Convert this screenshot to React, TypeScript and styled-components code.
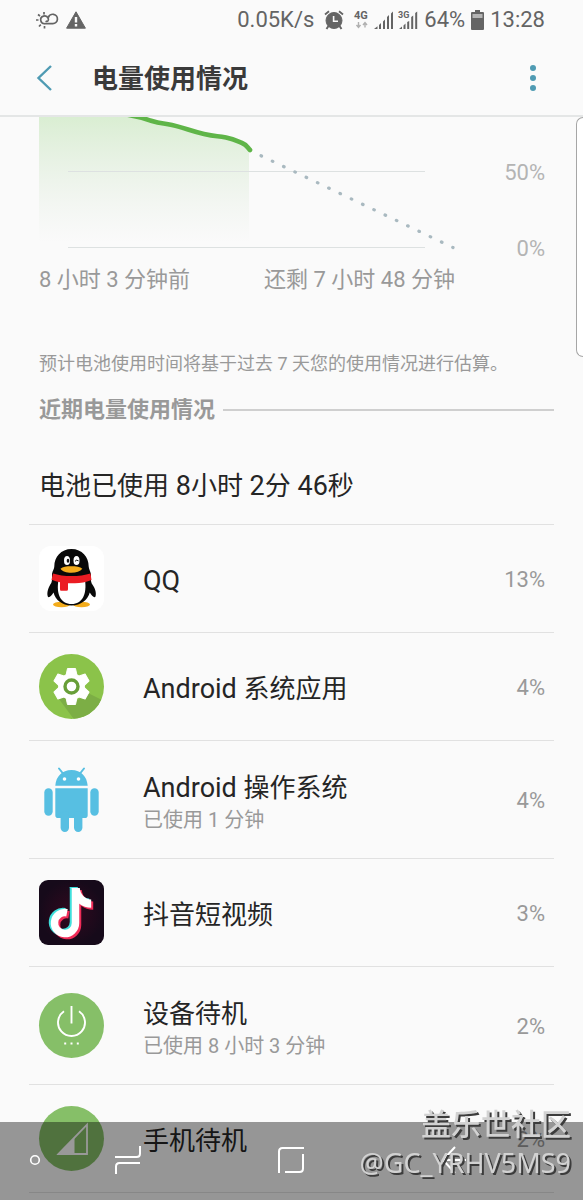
import React from 'react';
import styled, { createGlobalStyle } from 'styled-components';

const GlobalStyle = createGlobalStyle`
  * { box-sizing: border-box; }
  body {
    margin: 0;
    background: #fafafa;
    color: #252525;
    font-family: Roboto, "Noto Sans CJK SC", sans-serif;
  }
  button { border: 0; padding: 0; background: none; cursor: pointer; }
  svg { display: block; flex: none; overflow: visible; }
`;

const Screen = styled.div`
  position: relative;
  min-height: 100vh;
`;

const StatusBar = styled.div`
  display: flex;
  align-items: center;
  height: 40px;
  padding: 0 38px 0 36px;
  font-size: 22px;
  line-height: 26px;
  color: #646464;
`;

const StatusGroup = styled.div<{ $gap: number; $push?: boolean }>`
  display: flex;
  align-items: center;
  gap: ${(p) => p.$gap}px;
  margin-left: ${(p) => (p.$push ? 'auto' : '0')};
`;

const Header = styled.header`
  display: flex;
  align-items: center;
  height: 77px;
  padding: 0 38px 0 32px;
  border-bottom: 2px solid #e4e6e6;
`;

const HeaderButton = styled.button`
  display: flex;
  align-items: center;
  justify-content: center;
  width: 24px;
  height: 40px;
`;

const Title = styled.h1`
  flex: 1;
  margin: 0 0 0 36px;
  padding-top: 2px;
  font-size: 26px;
  line-height: 38px;
  font-weight: 700;
  color: #3a3a3a;
`;

const Content = styled.main`
  padding: 0 29px;
`;

const ChartRow = styled.section`
  display: flex;
  height: 144px;
  padding: 0 9px 0 10px;
`;

const ChartSvg = styled.svg`
  flex: 1 1 0;
  min-width: 0;
  height: 134px;
  overflow: hidden;
`;

const Axis = styled.div`
  display: flex;
  flex-direction: column;
  gap: 50px;
  width: 90px;
  padding-top: 43px;
  text-align: right;
  font-size: 22px;
  line-height: 26px;
  color: #b4b4b4;
`;

const TimeLabels = styled.div`
  display: flex;
  justify-content: space-between;
  margin-top: 5px;
  padding: 0 99px 0 10px;
  font-size: 22px;
  line-height: 28px;
  color: #999;
`;

const Note = styled.p`
  margin: 56px 0 0;
  padding-left: 10px;
  font-size: 18px;
  line-height: 28px;
  color: #999;
`;

const SectionTitle = styled.h2`
  display: flex;
  align-items: center;
  gap: 8px;
  margin: 16px 0 0;
  padding-left: 10px;
  font-size: 22px;
  line-height: 32px;
  font-weight: 700;
  color: #999;

  &::after {
    content: '';
    flex: 1;
    height: 2px;
    background: #cfcfcf;
  }
`;

const Total = styled.p`
  margin: 0;
  padding: 41px 10px 19px;
  font-size: 26px;
  line-height: 38px;
`;

const Latin = styled.span`
  font-size: 27px;
`;

const AppList = styled.ul`
  margin: 0;
  padding: 0;
  list-style: none;
  border-top: 1px solid #e1e1e1;
`;

const AppRow = styled.li<{ $tall?: boolean }>`
  display: flex;
  align-items: center;
  height: ${(p) => (p.$tall ? 118 : 108)}px;
  padding: 0 9px 0 10px;
  border-bottom: 1px solid #e1e1e1;
`;

const AppText = styled.div`
  flex: 1;
  margin-left: 39px;
  padding-top: 4px;
`;

const AppName = styled.div`
  font-size: 26px;
  line-height: 36px;
`;

const AppDetail = styled.div`
  font-size: 20px;
  line-height: 28px;
  color: #999;
`;

const Percent = styled.div`
  padding-top: 2px;
  font-size: 22px;
  line-height: 28px;
  color: #999;
`;

const EdgeHandle = styled.div`
  position: absolute;
  top: 117px;
  right: 0;
  width: 7px;
  height: 240px;
  border: 1px solid #a6a6a6;
  border-right: 0;
  border-radius: 8px 0 0 8px;
  background: #fff;
`;

const NavBar = styled.nav`
  position: fixed;
  left: 0;
  right: 0;
  bottom: 0;
  display: grid;
  grid-template-columns: 46px 1fr 1fr 1fr 48px;
  height: 78px;
  padding-bottom: 2px;
  background: rgba(0, 0, 0, 0.4);
`;

const NavButton = styled.button<{ $end?: boolean }>`
  display: flex;
  align-items: center;
  justify-content: ${(p) => (p.$end ? 'flex-end' : 'center')};
  padding-right: ${(p) => (p.$end ? 5 : 0)}px;
`;

const Watermark = styled.div`
  position: fixed;
  right: 12px;
  bottom: 18px;
  text-align: right;
  color: #d2d2d2;
  text-shadow: 2px 2px 0 #3c3c3c;
  pointer-events: none;
`;

const WatermarkSite = styled.div`
  font-size: 30px;
  line-height: 38px;
  font-weight: 500;
`;

const WatermarkUser = styled.div`
  font-family: "Noto Sans", sans-serif;
  font-size: 27px;
  line-height: 38px;
`;

const WeatherIcon = () => (
  <svg width="22" height="18" viewBox="0 0 22 18" fill="none" stroke="#646464" strokeWidth="1.700">
    <path d="M8.800 12.700h8a4.700 4.700 0 1 0-4.600-6" />
    <path d="M9 12.700a3.900 3.900 0 1 1 3.200-5.400c1 3-1.200 3.700-2.500 2.500" />
    <path d="M0 9h2.500M2 3.500l2 1.500M8 1v2.500M3 15.500l1.800-1.800M8.500 15v2.500" />
  </svg>
);

const WarningIcon = () => (
  <svg width="20" height="18" viewBox="0 0 20 18">
    <path d="M10 .8 19.400 17.200H.6Z" fill="#646464" stroke="#646464" strokeLinejoin="round" />
    <path d="M8.800 6h2.400v5.500H8.800zM8.800 13h2.400v2.400H8.800z" fill="#fafafa" />
  </svg>
);

const AlarmIcon = () => (
  <svg width="20" height="20" viewBox="0 0 20 20" fill="none" stroke="#646464">
    <circle cx="10" cy="10.500" r="8" fill="#646464" />
    <path d="M1 4.500 5 1.200M19 4.500l-4-3.300" strokeWidth="1.800" />
    <path d="m4.500 16-2 3M15.500 16l2 3" strokeWidth="2" />
    <path d="M9.600 6v5.200h4.400" stroke="#fafafa" strokeWidth="1.600" />
  </svg>
);

const DataIcon = () => (
  <svg width="16" height="20" viewBox="0 0 16 20" fill="none" stroke="#b0b0b0">
    <text x="0" y="9" fontSize="11" fontWeight="700" fill="#646464" stroke="none">4G</text>
    <path d="M4.500 12v5M2.500 15l2 2.500 2-2.500M11 17.500v-5M9 15l2-2.500 2 2.500" strokeWidth="1.400" />
  </svg>
);

const SignalIcon = ({ label }: { label?: string }) => (
  <svg width="20" height="20" viewBox="0 0 20 20">
    <path
      d={
        label
          ? 'M1 19l3-2.500V19zM5.500 15.500l2-2V19h-2zM9.200 12l2-1v8h-2zM13.200 7l2-1.500V19h-2zM17.200 3l2-1.500V19h-2z'
          : 'M0 19l3.500-2.800V19zM5 15l2-2v6H5zM9 11.500l2-2V19H9zM13 7l2-2v14h-2zM17 3.500l2-2V19h-2z'
      }
      fill="#646464"
    />
    {label && <text x="0" y="8" fontSize="9" fontWeight="700" fill="#646464">{label}</text>}
  </svg>
);

const BatteryIcon = () => (
  <svg width="13" height="20" viewBox="0 0 13 20">
    <path d="M4 0h5v2h3a1 1 0 0 1 1 1v16a1 1 0 0 1-1 1H1a1 1 0 0 1-1-1V3a1 1 0 0 1 1-1h3z" fill="#646464" />
    <path d="M1.500 4h10v4h-10z" fill="#b4b4b4" />
  </svg>
);

const QQIcon = () => (
  <svg width="65" height="65" viewBox="0 0 65 65">
    <rect width="65" height="65" rx="12" fill="#fff" />
    <ellipse cx="22.500" cy="58.500" rx="8.500" ry="2.800" fill="#f3ac1c" />
    <ellipse cx="42.500" cy="58.500" rx="8.500" ry="2.800" fill="#f3ac1c" />
    <path
      d="M32.500 3C22 3 15.300 11 15.300 20.500c0 2.500-1.800 4-2.300 7.500-.1 3 .5 6-.7 9C9.500 41 7.500 46.500 8.800 50.500c1 2 4-1 5.700-4C16.500 54 23 59.500 32.500 59.500S48.500 54 50.800 46.500c1.700 3 4.700 6 5.700 4C57.800 46.500 55.500 41 52.700 37.500c-1.200-3-.7-6-.7-9-.5-3.500-2.300-5.500-2.300-8C49.700 11 43 3 32.500 3Z"
      fill="#090909"
    />
    <path d="M19.500 34c-2.500 14 2 24 13 24s15.500-10 13.500-24z" fill="#fff" />
    <ellipse cx="28" cy="14.500" rx="3" ry="4.600" fill="#fff" />
    <ellipse cx="37.500" cy="14.500" rx="3" ry="4.600" fill="#fff" />
    <ellipse cx="29" cy="14.700" rx="1.300" ry="2" fill="#111" />
    <path d="M36 15.300q1.500-2 3.500-.5" fill="none" stroke="#111" />
    <path d="M21.500 22.800c2-2 6-2.600 10.800-2.600s9 .6 11 2.600c-2 2.800-6 4-11 4s-9-1.200-10.800-4Z" fill="#f3ac1c" />
    <path d="M14 27.500c10 3.400 27 3.400 37.500 0l1 6.500c-6 2.500-11 3-16.500 3.300h-7v6q0 1.500-1.500 1.500H22q-1 0-1-1.500v-7c-3-.6-5.500-1.300-8.500-2.600z" fill="#eb1c23" />
  </svg>
);

const GearIcon = () => (
  <svg width="65" height="65" viewBox="0 0 65 65">
    <clipPath id="gearDisc"><circle cx="32.500" cy="32.500" r="32.500" /></clipPath>
    <g clipPath="url(#gearDisc)">
      <path d="M0 0h65v65H0z" fill="#8bc34a" />
      <path d="M17 41 37 68h28V47L49 39 36 48z" fill="#7cae45" />
    </g>
    <g fill="#fff" stroke="#fff" strokeLinejoin="round">
      <circle cx="32.500" cy="32.500" r="13" />
      {[0, 60, 120, 180, 240, 300].map((a) => (
        <path key={a} d="M28.500 14.500h8l1.500 7h-11z" transform={`rotate(${a} 32.500 32.500)`} />
      ))}
    </g>
    <circle cx="32.500" cy="32.500" r="6.500" fill="#fff" stroke="#689f38" strokeWidth="3.400" />
  </svg>
);

const AndroidIcon = () => (
  <svg width="65" height="65" viewBox="0 0 65 65" fill="#57bfe2">
    <path d="M16.300 18.700C17 9.500 23 3 32.500 3s15.500 6.500 16.200 15.700zM16.300 21.200h32.400v27a2.800 2.800 0 0 1-2.800 2.800H19.100a2.800 2.800 0 0 1-2.800-2.800z" />
    <rect x="5.300" y="21.200" width="8.400" height="27.500" rx="4.200" />
    <rect x="51.300" y="21.200" width="8.400" height="27.500" rx="4.200" />
    <rect x="21.600" y="44" width="8.400" height="21" rx="4.200" />
    <rect x="35" y="44" width="8.400" height="21" rx="4.200" />
    <path d="m20 1.500 4 5M45 1.500l-4 5" stroke="#57bfe2" strokeWidth="2" strokeLinecap="round" />
    <circle cx="25.500" cy="12" r="1.800" fill="#fff" />
    <circle cx="39.500" cy="12" r="1.800" fill="#fff" />
  </svg>
);

const noteRing = 'M28 32.700A10.500 10.500 0 1 0 36.500 43V8';
const noteFlag = 'M32.500 8h8.200c.8 6.500 5 11 11.500 11.500v8.300c-4.500 0-8.500-1.500-12-4z';

const DouyinIcon = () => (
  <svg width="65" height="65" viewBox="0 0 65 65">
    <defs>
      <radialGradient id="douyinBg">
        <stop offset="0" stopColor="#32091f" />
        <stop offset="1" stopColor="#160a1a" />
      </radialGradient>
    </defs>
    <rect width="65" height="65" rx="9" fill="url(#douyinBg)" />
    {[
      { color: '#3fe0dc', move: 'translate(-2 -1)' },
      { color: '#f02c58', move: 'translate(2 2)' },
      { color: '#fff', move: 'translate(0 0)' },
    ].map((layer) => (
      <g key={layer.color} transform={layer.move}>
        <path d={noteRing} fill="none" stroke={layer.color} strokeWidth="7.500" />
        <path d={noteFlag} fill={layer.color} />
      </g>
    ))}
  </svg>
);

const PowerIcon = () => (
  <svg width="65" height="65" viewBox="0 0 65 65">
    <circle cx="32.500" cy="32.500" r="32.500" fill="#86bf68" />
    <path d="M25 18.300a13.500 13.500 0 1 0 15 0M32.500 13v17.500" fill="none" stroke="#fff" strokeWidth="1.900" />
    <path d="M25.200 49.500h2v2h-2zM31.500 49.500h2v2h-2zM37.800 49.500h2v2h-2z" fill="#fff" />
  </svg>
);

const CellIcon = () => (
  <svg width="65" height="65" viewBox="0 0 65 65">
    <circle cx="32.500" cy="32.500" r="32.500" fill="#86bf68" />
    <path d="M19.500 48 48 18.700V48z" fill="none" stroke="#fff" strokeWidth="1.800" />
    <path d="M19 48.500 35.500 31v17.500z" fill="#fff" />
  </svg>
);

const BatteryChart = () => (
  <ChartSvg viewBox="0 0 416 134" preserveAspectRatio="none" role="img" aria-label="电量图表">
    <defs>
      <linearGradient id="chartFill" x1="0" y1="0" x2="0" y2="1">
        <stop offset="0" stopColor="#86cf6c" stopOpacity="0.28" />
        <stop offset="1" stopColor="#b4ccb0" stopOpacity="0" />
      </linearGradient>
    </defs>
    <path d="M0 0H104L131 9 164 18 186 22 204 27 210 34V126H0Z" fill="url(#chartFill)" />
    <path d="M29 54.500H386M29 130.500H386" stroke="#dde1e1" strokeWidth="1" />
    <path
      d="M84-3C98-1 104 1 113 4S124 6 133 8C146 11 152 14 165 17S178 18.500 187 20.500 198 24 203 26 208 30 211 33"
      fill="none"
      stroke="#5fb548"
      strokeWidth="4.600"
      strokeLinecap="round"
    />
    <path
      d="M222 38.700 414 130.500"
      stroke="#a9b9c0"
      strokeWidth="3.200"
      strokeLinecap="round"
      strokeDasharray="0.600 11.900"
    />
  </ChartSvg>
);

const apps = [
  { latin: 'QQ', name: '', percent: '13%', Icon: QQIcon },
  { latin: 'Android ', name: '系统应用', percent: '4%', Icon: GearIcon },
  { latin: 'Android ', name: '操作系统', detail: '已使用 1 分钟', percent: '4%', Icon: AndroidIcon },
  { name: '抖音短视频', percent: '3%', Icon: DouyinIcon },
  { name: '设备待机', detail: '已使用 8 小时 3 分钟', percent: '2%', Icon: PowerIcon },
  { name: '手机待机', percent: '2%', Icon: CellIcon },
];

export default function App() {
  return (
    <Screen lang="zh-CN">
      <GlobalStyle />
      <StatusBar>
        <StatusGroup $gap={8}>
          <WeatherIcon />
          <WarningIcon />
        </StatusGroup>
        <StatusGroup $gap={6} $push>
          <StatusGroup $gap={10}>
            <span>0.05K/s</span>
            <AlarmIcon />
            <StatusGroup $gap={4}>
              <DataIcon />
              <SignalIcon />
              <SignalIcon label="3G" />
            </StatusGroup>
          </StatusGroup>
          <span>64%</span>
          <BatteryIcon />
          <span>13:28</span>
        </StatusGroup>
      </StatusBar>

      <Header>
        <HeaderButton aria-label="返回">
          <svg width="16" height="26" viewBox="0 0 16 26" fill="none" stroke="#4f9bb3" strokeWidth="2.400">
            <path d="M15 1 2.500 13 15 25" />
          </svg>
        </HeaderButton>
        <Title>电量使用情况</Title>
        <HeaderButton aria-label="更多选项">
          <svg width="8" height="26" viewBox="0 0 8 26" fill="#4f9bb3">
            <circle cx="4" cy="3" r="3" />
            <circle cx="4" cy="13" r="3" />
            <circle cx="4" cy="23" r="3" />
          </svg>
        </HeaderButton>
      </Header>

      <Content>
        <ChartRow>
          <BatteryChart />
          <Axis>
            <span>50%</span>
            <span>0%</span>
          </Axis>
        </ChartRow>
        <TimeLabels>
          <span>8 小时 3 分钟前</span>
          <span>还剩 7 小时 48 分钟</span>
        </TimeLabels>
        <Note>预计电池使用时间将基于过去 7 天您的使用情况进行估算。</Note>
        <SectionTitle>近期电量使用情况</SectionTitle>
        <Total>
          电池已使用<Latin> 8</Latin>小时<Latin> 2</Latin>分<Latin> 46</Latin>秒
        </Total>
        <AppList>
          {apps.map(({ latin, name, detail, percent, Icon }) => (
            <AppRow key={`${latin}${name}`} $tall={Boolean(detail)}>
              <Icon />
              <AppText>
                <AppName>
                  {latin && <Latin>{latin}</Latin>}
                  {name}
                </AppName>
                {detail && <AppDetail>{detail}</AppDetail>}
              </AppText>
              <Percent>{percent}</Percent>
            </AppRow>
          ))}
        </AppList>
      </Content>

      <EdgeHandle />

      <NavBar>
        <NavButton $end aria-label="隐藏导航栏">
          <svg width="12" height="12" viewBox="0 0 12 12" fill="none" stroke="#fff" strokeWidth="1.600">
            <circle cx="6" cy="6" r="4.300" />
          </svg>
        </NavButton>
        <NavButton aria-label="最近任务">
          <svg width="26" height="30" viewBox="0 0 26 30" fill="none" stroke="#fff" strokeWidth="2">
            <path d="M0 12H21.500Q25 12 25 8.500V1M25 18H4.500Q1 18 1 21.500V29" />
          </svg>
        </NavButton>
        <NavButton aria-label="主屏幕">
          <svg width="26" height="28" viewBox="0 0 26 28" fill="none" stroke="#fff" strokeWidth="2">
            <path d="M26 2H4.500Q1 2 1 5.500V27M7 26H21.500Q25 26 25 22.500V8" />
          </svg>
        </NavButton>
        <NavButton aria-label="后退">
          <svg width="26" height="28" viewBox="0 0 26 28" fill="none" stroke="#fff" strokeWidth="2">
            <path d="M14 1 2 14l12 13M2 14h23" />
          </svg>
        </NavButton>
      </NavBar>

      <Watermark>
        <WatermarkSite>盖乐世社区</WatermarkSite>
        <WatermarkUser>@GC_YRHV5MS9</WatermarkUser>
      </Watermark>
    </Screen>
  );
}
